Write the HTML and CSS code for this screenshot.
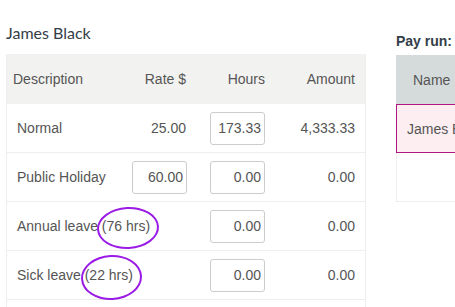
FILE: index.html
```html
<!DOCTYPE html>
<html lang="en">
<head>
  <meta charset="UTF-8">
  <title>Pay run - James Black</title>
  <link rel="stylesheet" href="styles.css">
</head>
<body>

  <div class="page">

    <!-- Employee pay lines -->
    <section class="employee">
      <h2 class="employee-name">James Black</h2>
      <table class="pay-lines">
        <colgroup>
          <col class="col-desc">
          <col class="col-rate">
          <col class="col-hours">
          <col class="col-amount">
        </colgroup>
        <thead>
          <tr>
            <th class="th-desc">Description</th>
            <th>Rate $</th>
            <th>Hours</th>
            <th>Amount</th>
          </tr>
        </thead>
        <tbody>
          <tr>
            <td>Normal</td>
            <td class="num">25.00</td>
            <td class="num"><input class="num-input" type="text" value="173.33"></td>
            <td class="num">4,333.33</td>
          </tr>
          <tr>
            <td>Public Holiday</td>
            <td class="num"><input class="num-input" type="text" value="60.00"></td>
            <td class="num"><input class="num-input" type="text" value="0.00"></td>
            <td class="num">0.00</td>
          </tr>
          <tr>
            <td>Annual leave <span class="circled">(76 hrs)</span></td>
            <td class="num"></td>
            <td class="num"><input class="num-input" type="text" value="0.00"></td>
            <td class="num">0.00</td>
          </tr>
          <tr>
            <td>Sick leave <span class="circled circled-low">(22 hrs)</span></td>
            <td class="num"></td>
            <td class="num"><input class="num-input" type="text" value="0.00"></td>
            <td class="num">0.00</td>
          </tr>
          <tr>
            <td></td>
            <td></td>
            <td></td>
            <td></td>
          </tr>
        </tbody>
      </table>
    </section>

    <!-- Pay run list -->
    <aside class="payrun">
      <h3 class="payrun-title">Pay run:</h3>
      <table class="payrun-table">
        <thead>
          <tr>
            <th>Name</th>
          </tr>
        </thead>
        <tbody>
          <tr class="selected">
            <td>James Black</td>
          </tr>
          <tr>
            <td></td>
          </tr>
        </tbody>
      </table>
    </aside>

  </div>

</body>
</html>
```

FILE: styles.css
```css
html, body {
  overflow: hidden;
}

body {
  margin: 0;
  background: #fff;
  font-family: "Liberation Sans", Arial, sans-serif;
  font-size: 14px;
  color: #555;
}

.page {
  display: flex;
  align-items: flex-start;
  padding-left: 6px;
}

/* left: employee lines */
.employee {
  flex-shrink: 0;
}
.employee-name {
  margin: 23px 0 11px;
  font-family: Lato, "Open Sans", sans-serif;
  font-weight: 400;
  font-size: 16px;
  line-height: 20px;
  color: #333e48;
}

.pay-lines {
  width: 360px;
  table-layout: fixed;
  border-collapse: separate;
  border-spacing: 0;
  border-left: 1px solid #eee;
  border-right: 1px solid #eee;
}
.col-desc   { width: 115px; }
.col-rate   { width: 74px; }
.col-hours  { width: 79px; }
.col-amount { width: 90px; }

.pay-lines th {
  height: 50px;
  padding: 0 10px;
  background: #f2f2f0;
  font-weight: 400;
  text-align: right;
}
.pay-lines th.th-desc {
  text-align: left;
  padding-left: 6px;
}

.pay-lines td {
  height: 48px;
  padding: 0 10px;
  border-bottom: 1px solid #eee;
  white-space: nowrap;
}
.pay-lines td.num {
  text-align: right;
}

.num-input {
  width: 55px;
  height: 33px;
  box-sizing: border-box;
  padding: 0 3px;
  border: 1px solid #ccc;
  border-radius: 3px;
  font-family: inherit;
  font-size: 14px;
  color: #555;
  text-align: right;
  vertical-align: middle;
}

/* hand drawn highlight round the leave balance */
.circled {
  position: relative;
}
.circled::after {
  content: "";
  position: absolute;
  left: -5px;
  right: -9px;
  top: -11px;
  bottom: -15px;
  border: 2px solid #9b1be6;
  border-radius: 50%;
  transform: rotate(-3deg);
}
.circled-low::after {
  left: -4px;
  right: -9px;
  top: -12px;
  bottom: -17px;
}

/* right: pay run */
.payrun {
  flex-shrink: 0;
  margin-left: 30px;
  padding-top: 33px;
}
.payrun-title {
  margin: 0 0 6px;
  font-size: 14px;
  line-height: 16px;
  font-weight: 700;
  color: #333e48;
}
.payrun-table {
  width: 130px;
  border-collapse: separate;
  border-spacing: 0;
}
.payrun-table th {
  height: 49px;
  padding: 0 17px;
  background: #d5dbdb;
  font-weight: 400;
  text-align: left;
  white-space: nowrap;
}
.payrun-table td {
  height: 48px;
  padding: 0 10px;
  border-left: 1px solid #eee;
  border-bottom: 1px solid #eee;
  white-space: nowrap;
}
.payrun-table .selected td {
  height: 47px;
  background: #fdeef1;
  border: 1px solid #b0177f;
}
```
